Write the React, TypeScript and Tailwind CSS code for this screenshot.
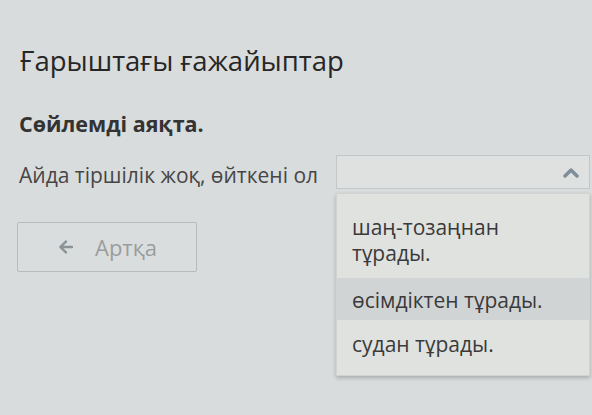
import { FaArrowLeft } from "react-icons/fa";

const options = [
  { lines: ["шаң-тозаңнан", "тұрады."], active: false, pad: "pt-[20px] pb-[12px]" },
  { lines: ["өсімдіктен тұрады."], active: true, pad: "pt-[9px] pb-[7px]" },
  { lines: ["судан тұрады."], active: false, pad: "pt-[11px] pb-[18px]" },
];

export default function App() {
  return (
    <div
      className="w-[592px] h-[415px] overflow-hidden bg-[#d9dcdc] text-[#2e2e2e]"
      style={{ fontFamily: '"Open Sans", "Noto Sans", sans-serif' }}
    >
      <div className="pl-[19px] pt-[43px]">
        <h1 className="ml-[1px] text-[27.5px] leading-[36px] font-normal text-[#262626]">
          Ғарыштағы ғажайыптар
        </h1>

        <p className="mt-[32px] text-[21.5px] leading-[26px] font-bold text-[#333]">
          Сөйлемді аяқта.
        </p>

        <div className="mt-[18px] flex items-start">
          <span className="pt-[7px] text-[21px] leading-[26px] text-[#464646] w-[317px]">
            Айда тіршілік жоқ, өйткені ол
          </span>
          <div className="relative">
            <div className="w-[254px] h-[34px] border border-[#c4c7c7] bg-[#dee1e0] flex items-center justify-end pr-[10px]">
              <svg width="16" height="11" viewBox="0 0 16 11" className="text-[#7e8d98]">
                <polyline
                  points="2,9 8,3 14,9"
                  fill="none"
                  stroke="currentColor"
                  strokeWidth="3.5"
                  strokeLinecap="round"
                  strokeLinejoin="round"
                />
              </svg>
            </div>
            <ul className="absolute left-0 top-[38px] w-[254px] bg-[#e0e2e0] border border-[#d0d3d2] shadow-[0_2px_4px_rgba(0,0,0,0.22)]">
              {options.map((o) => (
                <li
                  key={o.lines.join(" ")}
                  className={
                    "px-[15px] text-[21px] leading-[26px] text-[#3a3a3a] " +
                    o.pad +
                    (o.active ? " bg-[#d0d4d5]" : "")
                  }
                >
                  {o.lines.map((l) => (
                    <div key={l}>{l}</div>
                  ))}
                </li>
              ))}
            </ul>
          </div>
        </div>

        <button className="-ml-[2px] mt-[33px] w-[180px] h-[50px] border border-[#b8bbbb] rounded-[2px] bg-[#dadddd] flex items-center pl-[40px] text-[#9a9d9e] text-[22px]">
          <FaArrowLeft className="w-[16px] h-[16px] text-[#8a9397]" />
          <span className="ml-[21px]">Артқа</span>
        </button>
      </div>
    </div>
  );
}
